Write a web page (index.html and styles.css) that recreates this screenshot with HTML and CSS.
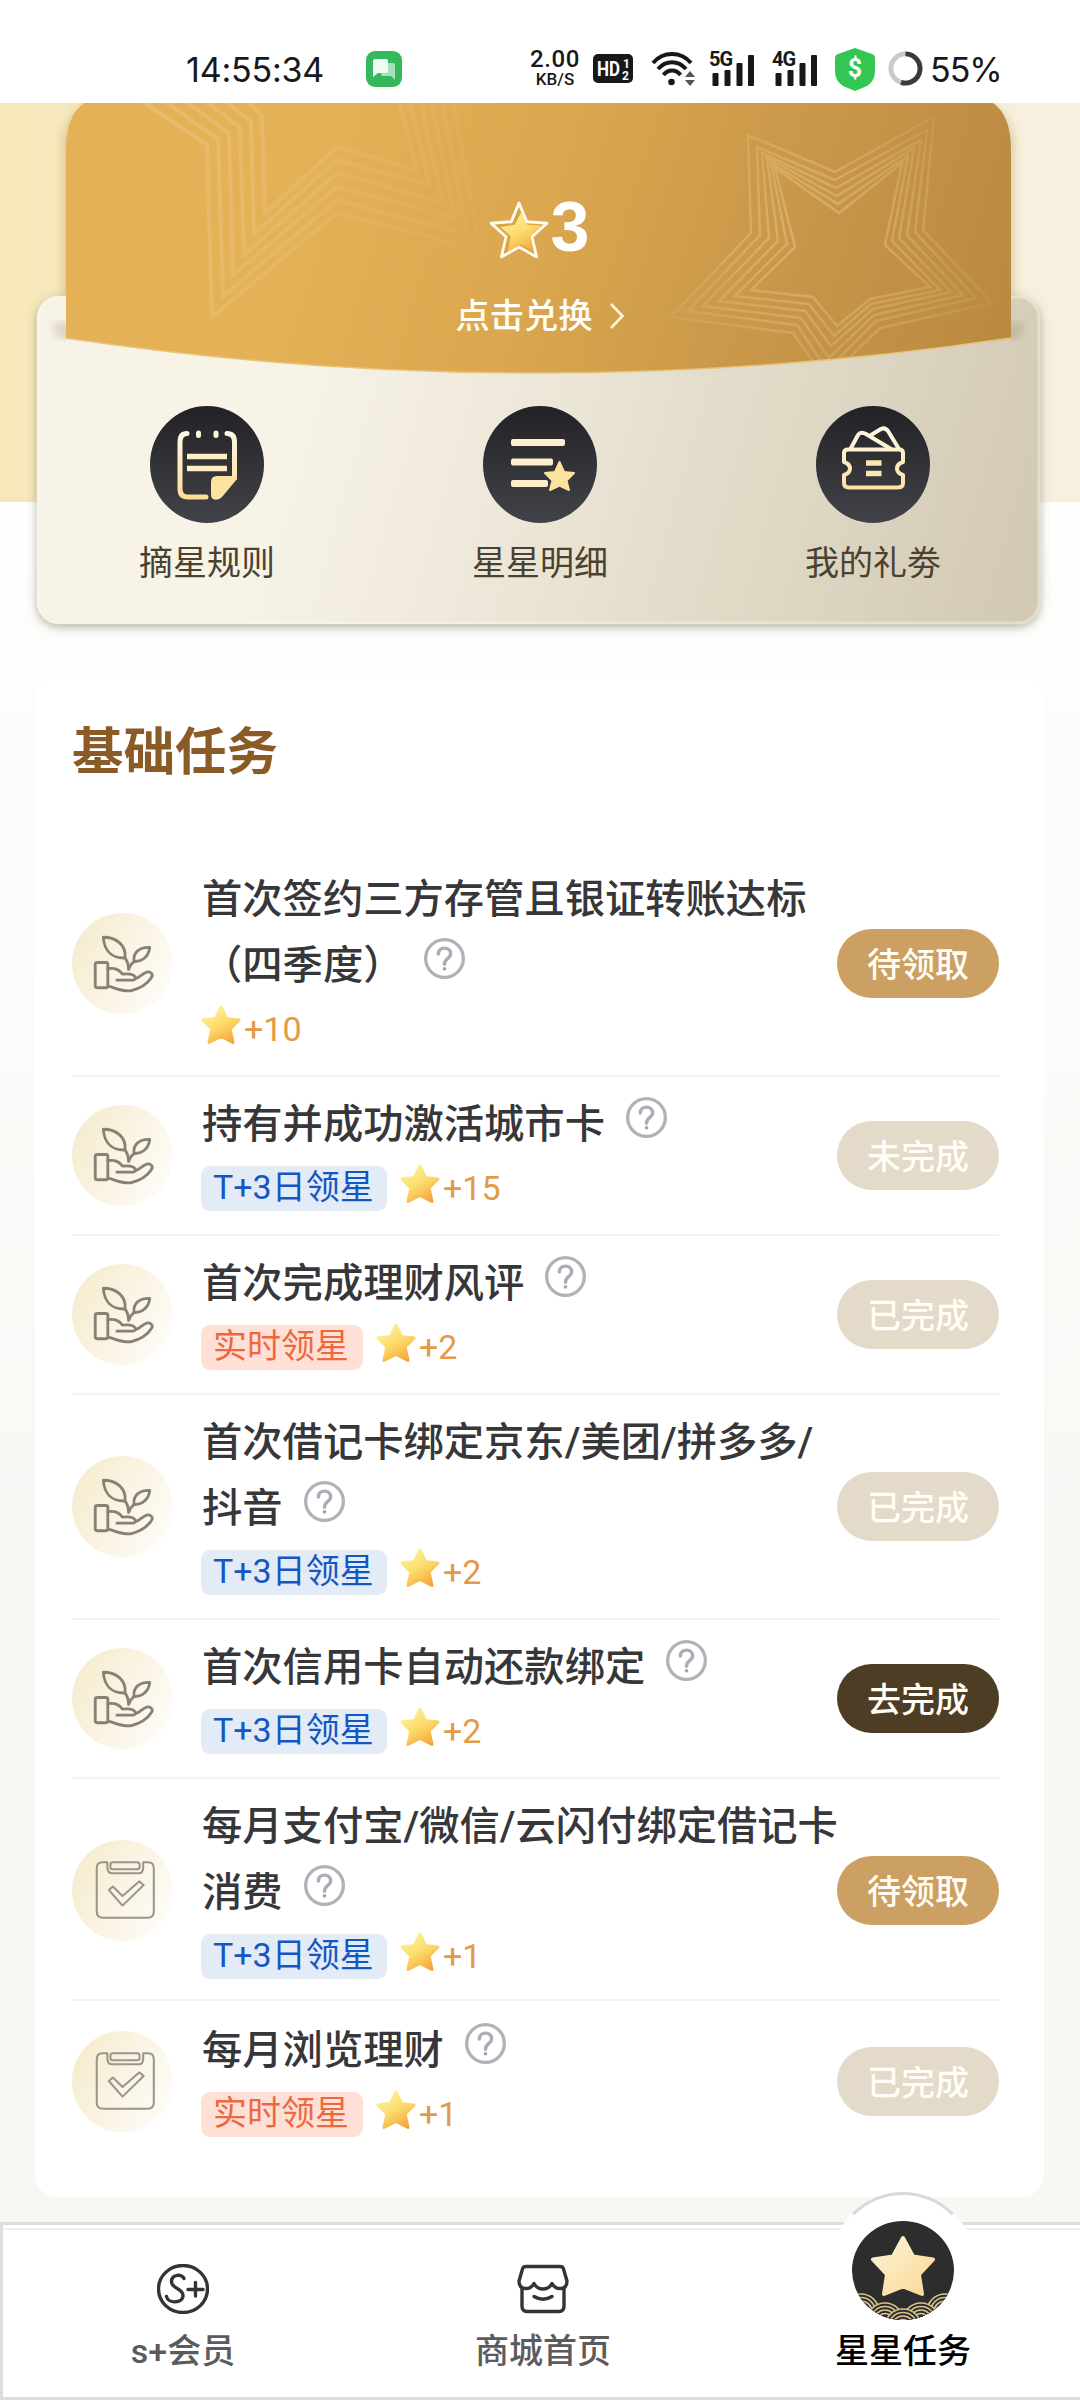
FILE: index.html
```html
<!DOCTYPE html>
<html lang="zh-CN">
<head>
<meta charset="utf-8">
<title>星星任务</title>
<link rel="stylesheet" href="styles.css">
</head>
<body>
<svg class="sprite" aria-hidden="true">
  <defs>
    <linearGradient id="starFill" x1="0.2" y1="0" x2="0.75" y2="1">
      <stop offset="0" stop-color="#fdf29a"/><stop offset="0.5" stop-color="#fcdc6c"/><stop offset="1" stop-color="#f4a63c"/>
    </linearGradient>
    <linearGradient id="cream" gradientUnits="userSpaceOnUse" x1="0" y1="22" x2="0" y2="95">
      <stop offset="0" stop-color="#fff9e8"/><stop offset="1" stop-color="#fbdc93"/>
    </linearGradient>
    <linearGradient id="blob" x1="0" y1="0.2" x2="1" y2="0.7">
      <stop offset="0" stop-color="#f5ebcd"/><stop offset="1" stop-color="#fefcf8"/>
    </linearGradient>
    <symbol id="i-star" viewBox="0 0 40 42">
      <path d="M20 3 L25.6 14.5 L38 16 L29.2 25 L32 38.5 L20 32.5 L8 38.5 L10.8 25 L2 16 L14.4 14.5 Z" fill="url(#starFill)" stroke="url(#starFill)" stroke-width="3" stroke-linejoin="round"/>
    </symbol>
    <symbol id="i-help" viewBox="0 0 40 40">
      <circle cx="20" cy="20" r="18.400" fill="none" stroke="#b0b2ba" stroke-width="3.200"/>
      <path d="M14 15.5 C14 8 26 8 26 15.5 C26 20 20 19.8 20 25.5" fill="none" stroke="#abadb6" stroke-width="3.400" stroke-linecap="round"/>
      <circle cx="20" cy="30" r="1.8" fill="#a4a6b0"/>
    </symbol>
    <symbol id="i-plant" viewBox="0 0 100 100">
      <circle cx="50" cy="50" r="50" fill="url(#blob)"/>
      <g fill="none" stroke="#888075" stroke-width="2.8" stroke-linecap="round" stroke-linejoin="round">
        <path d="M31 24 C44 24 54 32 52.5 44.5 C40 45 32 38 31 24 Z"/>
        <path d="M77 34 C67 33.5 60 39 61.5 48 C70 48.5 76 42.5 77 34 Z"/>
        <path d="M52.5 44.5 C55 48 56 51 56 56 C57 52 58.500 50.500 61.500 48"/>
        <rect x="23" y="49" width="12.500" height="25" rx="2"/>
        <path d="M35.500 55 C44 54 47 57 50 60.500 C55 60 62 60.500 63 64.500 C62.500 66 62 66.500 60 66.500 H44.500 M63 65 C67 64 70 59.500 74 58.500 C78 57.500 81 61 78.500 64 C74 71 66 75 58 77 C50 78 44 74.500 35.500 72.500"/>
      </g>
    </symbol>
    <symbol id="i-board" viewBox="0 0 100 100">
      <circle cx="50" cy="50" r="50" fill="url(#blob)"/>
      <g fill="none" stroke="#9a958c" stroke-width="2" stroke-linejoin="round">
        <path d="M35 22 H30 Q24.500 22 24.500 28 V70.500 Q24.500 77 31 77 H74.500 Q81 77 81 70.500 V28 Q81 22 75.500 22 H70.500 V27 Q70.500 33 66 33 H40 Q35 33 35 27 Z"/>
        <rect x="38" y="22" width="29" height="7" rx="2.500"/>
        <path d="M36.500 49.500 L40.500 46 L50 55.500 L66.500 41 L71 44.500 L50 65 Z"/>
      </g>
    </symbol>
    <symbol id="i-bars" viewBox="0 0 46 36">
      <g fill="#17181a"><rect x="3.500" y="22" width="6" height="13" rx="1"/><rect x="15.500" y="19" width="6" height="16" rx="1"/><rect x="27.500" y="12" width="6" height="23" rx="1"/><rect x="39" y="4" width="6" height="31" rx="1"/></g>
    </symbol>
  </defs>
</svg>

<header class="status">
  <span class="clock">14:55:34</span>
  <svg class="chat" viewBox="0 0 36 36"><rect width="36" height="36" rx="9" fill="#35b85c"/><path d="M17 12h10a2 2 0 0 1 2 2v15l-4-4h-8a2 2 0 0 1-2-2v-9a2 2 0 0 1 2-2z" fill="#a9e2ba"/><path d="M9 8h11a2 2 0 0 1 2 2v10a2 2 0 0 1-2 2h-8l-5 4V10a2 2 0 0 1 2-2z" fill="#f1fbf3"/></svg>
  <span class="speed"><b>2.00</b><i>KB/S</i></span>
  <svg class="hd" viewBox="0 0 40 29"><rect width="40" height="29" rx="5" fill="#17181a"/><g fill="#fff" font-family="Roboto, sans-serif" font-weight="700"><text x="4" y="22" font-size="20" textLength="23" lengthAdjust="spacingAndGlyphs">HD</text><text x="30" y="14" font-size="12">1</text><text x="29" y="26" font-size="12">2</text></g></svg>
  <svg class="wifi" viewBox="0 0 44 36"><g fill="none" stroke="#17181a" stroke-width="4"><path d="M2 12 C12 0 30 0 40 12"/><path d="M7 18 C15 9 27 9 35 18"/><path d="M12.500 24 C17 18 25 18 29.500 24"/></g><circle cx="20.500" cy="31" r="3.300" fill="#17181a"/><path d="M34 26l5-6 5 6zM34 29l5 6 5-6z" fill="#555"/></svg>
  <span class="signal s5"><svg viewBox="0 0 46 36"><use href="#i-bars"/></svg><em>5G</em></span>
  <span class="signal s4"><svg viewBox="0 0 46 36"><use href="#i-bars"/></svg><em>4G</em></span>
  <svg class="shield" viewBox="0 0 40 44"><path d="M20 1 L37 7 Q40 8 40 11 V24 Q40 34 32 39 L20 44 L8 39 Q0 34 0 24 V11 Q0 8 3 7 Z" fill="#33c653"/><text x="20" y="30" font-family="Roboto, sans-serif" font-size="25" font-weight="700" fill="#fff" text-anchor="middle">$</text></svg>
  <svg class="ring" viewBox="0 0 36 36"><circle cx="18" cy="18" r="15" fill="none" stroke="#c9c9c9" stroke-width="5"/><path d="M18 3 A15 15 0 1 1 13.400 32.300" fill="none" stroke="#3a3a3c" stroke-width="5"/></svg>
  <span class="battery">55%</span>
</header>

<main>
  <section class="wallet">
    <svg class="wallet-art" viewBox="0 103 1080 577" aria-hidden="true">
      <defs>
        <linearGradient id="gold" gradientUnits="userSpaceOnUse" x1="330" y1="120" x2="1000" y2="330">
          <stop offset="0" stop-color="#e4b157"/><stop offset="0.3" stop-color="#dca84f"/><stop offset="0.6" stop-color="#cc9a4a"/><stop offset="1" stop-color="#ba8a42"/>
        </linearGradient>
        <linearGradient id="holder" gradientUnits="userSpaceOnUse" x1="300" y1="350" x2="1040" y2="560">
          <stop offset="0" stop-color="#f7f3e7"/><stop offset="0.25" stop-color="#f0eadd"/><stop offset="0.5" stop-color="#e4dfcd"/><stop offset="1" stop-color="#d2c9b3"/>
        </linearGradient>
        <filter id="drop" x="-10%" y="-10%" width="120%" height="125%"><feDropShadow dx="0" dy="3" stdDeviation="5" flood-color="#6b6140" flood-opacity="0.5"/></filter>
        <filter id="soft" x="-10%" y="-10%" width="120%" height="120%"><feGaussianBlur stdDeviation="4"/></filter>
        <clipPath id="goldClip"><path d="M66 150 Q66 96 110 96 H967 Q1011 96 1011 150 V338 Q775 373 540 373 Q300 373 66 338 Z"/></clipPath>
        <clipPath id="holderClip"><rect x="37" y="296" width="1003" height="328" rx="22"/></clipPath>
        <linearGradient id="fadeL" gradientUnits="userSpaceOnUse" x1="130" y1="110" x2="470" y2="230"><stop offset="0" stop-color="#fff" stop-opacity="0.15"/><stop offset="1" stop-color="#fff" stop-opacity="0.02"/></linearGradient>
        <radialGradient id="fadeR" gradientUnits="userSpaceOnUse" cx="820" cy="240" r="180"><stop offset="0" stop-color="#fbe3b0" stop-opacity="0.34"/><stop offset="0.5" stop-color="#fbe3b0" stop-opacity="0.22"/><stop offset="1" stop-color="#fbe3b0" stop-opacity="0.06"/></radialGradient>
      </defs>
      <rect x="62" y="98" width="953" height="260" rx="46" fill="#b89e5c" opacity="0.35" filter="url(#soft)"/>
      <rect x="37" y="296" width="1003" height="328" rx="22" fill="url(#holder)" filter="url(#drop)"/>
      <rect x="38" y="297" width="1001" height="326" rx="21" fill="none" stroke="#fbf9f0" stroke-width="3" opacity="0.4"/>
      <g clip-path="url(#holderClip)"><path d="M54 322 V328 Q56 340 68 340 H1009 Q1021 340 1023 328 V322 Z" fill="#8d8468" opacity="0.28" filter="url(#soft)"/><path d="M66 339 Q300 376 540 376 Q775 376 1011 339 L1011 350 L540 388 L66 350Z" fill="url(#holder)"/></g>
      <g clip-path="url(#goldClip)">
        <rect x="66" y="96" width="945" height="280" fill="url(#gold)"/>
        <g fill="none" stroke="url(#fadeL)" stroke-width="4">
          <path d="M230 85 L262 116 L265 213 L337 147 L417 170 L396 90"/>
          <path d="M210 87 L251 122 L254 234 L337 160 L430 186 L407 90"/>
          <path d="M190 88 L240 128 L244 255 L337 173 L442 202 L418 90"/>
          <path d="M170 90 L229 133 L233 275 L337 187 L455 218 L429 90"/>
          <path d="M150 91 L218 139 L223 296 L337 200 L467 234 L440 90"/>
          <path d="M130 93 L207 145 L212 317 L337 213 L480 250 L451 90"/>
        </g>
        <g fill="none" stroke="url(#fadeR)" stroke-width="2.500">
          <path d="M835 172 L934 117 L923 230 L992 303 L880 328 L826 380 L793 333 L671 317 L751 233 L748 135 Z"/>
          <path d="M835 180 L927 130 L915 232 L976 298 L876 321 L827 370 L797 325 L688 311 L760 235 L757 147 Z"/>
          <path d="M836 188 L921 140 L907 235 L963 295 L874 315 L829 358 L801 318 L703 306 L769 238 L762 153 Z"/>
          <path d="M837 196 L914 148 L899 238 L951 292 L873 309 L831 346 L805 311 L719 301 L778 241 L767 158 Z"/>
          <path d="M838 204 L908 156 L892 241 L940 290 L871 304 L834 336 L809 304 L735 296 L787 244 L771 163 Z"/>
          <path d="M839 213 L902 163 L885 245 L930 287 L870 299 L837 326 L813 297 L751 290 L795 247 L775 168 Z"/>
        </g>
      </g>
      <path d="M66 338 Q300 373 540 373 Q775 373 1011 338" fill="none" stroke="#e9c27a" stroke-width="1.500"/>
    </svg>
    <div class="balance">
      <svg viewBox="0 0 58 58"><path d="M29 3 L36.500 21 L56 22.500 L41.500 35.500 L46 55 L29 45.500 L12 55 L16.500 35.500 L2 22.500 L21.500 21 Z" fill="#d9a443" stroke="#fffaf0" stroke-width="2.800" stroke-linejoin="round"/><path d="M31 12 L37 24 L51 25 L40 35 L43 50 L31 43 L18 50 L21 35 L11 26 L25 24 Z" fill="url(#starFill)"/></svg>
      <strong>3</strong>
    </div>
    <div class="redeem">点击兑换<svg viewBox="0 0 16 28"><path d="M2 2 L13.500 14 L2 26" fill="none" stroke="#fff3d8" stroke-width="2.600"/></svg></div>
    <nav class="actions">
      <a>
        <svg viewBox="0 0 114 117"><defs><linearGradient id="night" x1="0" y1="0" x2="0" y2="1"><stop offset="0" stop-color="#222226"/><stop offset="1" stop-color="#424348"/></linearGradient></defs><ellipse cx="57" cy="58.500" rx="57" ry="58.500" fill="url(#night)"/><g fill="none" stroke="url(#cream)" stroke-width="5" stroke-linecap="round"><path d="M37 27.500 Q30 27.500 30 36 V83 Q30 91 38 91 H56 M77 27.500 Q84.500 27.500 84.500 36 V72"/><path d="M48.500 27 V29.500 M66 27 V29.500"/></g><path d="M37 50.500 h40 M37 62.500 h40" stroke="#fdeec4" stroke-width="5.500"/><path d="M87 70 V73 L72 91 Q68 95 63 93 Q61 92 61 88 V76 Q61 70 67 70 Z" fill="#fce3a0"/></svg>
        <span>摘星规则</span>
      </a>
      <a>
        <svg viewBox="0 0 114 117"><ellipse cx="57" cy="58.500" rx="57" ry="58.500" fill="url(#night)"/><g fill="#fdefcb"><rect x="28" y="33" width="54" height="7" rx="2"/><rect x="28" y="52.500" width="42" height="7" rx="2"/><rect x="28" y="74" width="37" height="7" rx="2"/></g><path d="M76.500 56 L81 66 L91 67 L83.500 74.500 L86 84 L76.500 79.500 L67 84 L69.500 74.500 L62 67 L72 66 Z" fill="#fce3a0" stroke="#fce3a0" stroke-width="2" stroke-linejoin="round"/></svg>
        <span>星星明细</span>
      </a>
      <a>
        <svg viewBox="0 0 114 117"><ellipse cx="57" cy="58.500" rx="57" ry="58.500" fill="url(#night)"/><g fill="none" stroke="url(#cream)" stroke-width="4" stroke-linejoin="round" stroke-linecap="round"><path d="M32 43.500 H83 Q87 43.500 87 47 V56 Q81 58 81 62.500 Q81 67 87 69 V77 Q87 81.500 82 81.500 H33 Q28 81.500 28 77 V69 Q34 67 34 62.500 Q34 58 28 56 V47 Q28 43.500 32 43.500 Z"/><path d="M35 42 L42 29 Q45 25 50 28 L75 43 M55 29 L65 23 Q69 21 72 25 L83 43"/></g><path d="M50 57 h15.500 M50 67.500 h15.500" stroke="#fce7b3" stroke-width="5.500"/></svg>
        <span>我的礼劵</span>
      </a>
    </nav>
  </section>

  <section class="tasks">
    <h2>基础任务</h2>
    <ul>
      <li>
        <svg class="kind"><use href="#i-plant"/></svg>
        <div class="info"><p>首次签约三方存管且银证转账达标<br>（四季度）<svg class="help"><use href="#i-help"/></svg></p><div class="meta"><svg class="star"><use href="#i-star"/></svg><span class="pts">+10</span></div></div>
        <button class="btn ready">待领取</button>
      </li>
      <li>
        <svg class="kind"><use href="#i-plant"/></svg>
        <div class="info"><p>持有并成功激活城市卡<svg class="help"><use href="#i-help"/></svg></p><div class="meta"><span class="tag later">T+3日领星</span><svg class="star"><use href="#i-star"/></svg><span class="pts">+15</span></div></div>
        <button class="btn off">未完成</button>
      </li>
      <li>
        <svg class="kind"><use href="#i-plant"/></svg>
        <div class="info"><p>首次完成理财风评<svg class="help"><use href="#i-help"/></svg></p><div class="meta"><span class="tag now">实时领星</span><svg class="star"><use href="#i-star"/></svg><span class="pts">+2</span></div></div>
        <button class="btn off">已完成</button>
      </li>
      <li>
        <svg class="kind"><use href="#i-plant"/></svg>
        <div class="info"><p>首次借记卡绑定京东/美团/拼多多/<br>抖音<svg class="help"><use href="#i-help"/></svg></p><div class="meta"><span class="tag later">T+3日领星</span><svg class="star"><use href="#i-star"/></svg><span class="pts">+2</span></div></div>
        <button class="btn off">已完成</button>
      </li>
      <li>
        <svg class="kind"><use href="#i-plant"/></svg>
        <div class="info"><p>首次信用卡自动还款绑定<svg class="help"><use href="#i-help"/></svg></p><div class="meta"><span class="tag later">T+3日领星</span><svg class="star"><use href="#i-star"/></svg><span class="pts">+2</span></div></div>
        <button class="btn go">去完成</button>
      </li>
      <li class="compact">
        <svg class="kind"><use href="#i-board"/></svg>
        <div class="info"><p>每月支付宝/微信/云闪付绑定借记卡<br>消费<svg class="help"><use href="#i-help"/></svg></p><div class="meta"><span class="tag later">T+3日领星</span><svg class="star"><use href="#i-star"/></svg><span class="pts">+1</span></div></div>
        <button class="btn ready">待领取</button>
      </li>
      <li class="last">
        <svg class="kind"><use href="#i-board"/></svg>
        <div class="info"><p>每月浏览理财<svg class="help"><use href="#i-help"/></svg></p><div class="meta"><span class="tag now">实时领星</span><svg class="star"><use href="#i-star"/></svg><span class="pts">+1</span></div></div>
        <button class="btn off">已完成</button>
      </li>
    </ul>
  </section>
</main>

<nav class="tabs">
  <a><svg class="tab-icon" viewBox="0 0 52 50"><ellipse cx="26" cy="25" rx="24.500" ry="23.500" fill="none" stroke="#333437" stroke-width="3.400"/><path d="M27 14.500 C25 9.500 14.500 10 14.500 17.500 C14.500 25 26 24 26 31.500 C26 39.500 11 40 9.500 32.500" fill="none" stroke="#333437" stroke-width="3.400" stroke-linecap="round"/><path d="M38.500 18.500 V32 M31 25.500 H46" stroke="#333437" stroke-width="3.400" stroke-linecap="round"/></svg><span>s+会员</span></a>
  <a><svg class="tab-icon" viewBox="0 0 52 50"><g fill="none" stroke="#333437" stroke-width="3.400" stroke-linejoin="round" stroke-linecap="round"><path d="M9 2.500 H43 Q46 2.500 46.500 5 L50 17 Q50 24 44 24.500 Q38 25 35 19.500 Q32 25 26 25 Q20 25 17 19.500 Q14 25 8 24.500 Q2 24 2 17 L5.500 5 Q6 2.500 9 2.500 Z"/><path d="M5 25 V42 Q5 47.500 10 47.500 H42 Q47 47.500 47 42 V25"/><path d="M17 32.500 Q26 38 35 32.500"/></g></svg><span>商城首页</span></a>
  <a class="active">
    <span class="bump"></span>
    <svg class="medal" viewBox="0 0 102 99">
      <defs><clipPath id="mc"><ellipse cx="51" cy="49.500" rx="51" ry="49.500"/></clipPath><linearGradient id="medalStar" x1="0" y1="0" x2="1" y2="1"><stop offset="0" stop-color="#fdf3d8"/><stop offset="1" stop-color="#fad893"/></linearGradient></defs>
      <g clip-path="url(#mc)"><rect width="102" height="99" fill="#2d2d2d"/>
        <g fill="#2d2d2d" stroke="#d9c38c" stroke-width="1.700">
          <g id="wave"><circle cx="9" cy="91" r="18"/><circle cx="9" cy="91" r="14.500"/><circle cx="9" cy="91" r="11"/><circle cx="9" cy="91" r="7.500"/></g><use href="#wave" x="84"/>
          <use href="#wave" x="24" y="9"/><use href="#wave" x="60" y="9"/><use href="#wave" x="42" y="15"/>
        </g></g>
      <path d="M51 17 L61 35.500 L81 38.500 L67 53.500 L70 73 L51 65.500 L32 73 L35 53.500 L21 38.500 L41 35.500 Z" fill="url(#medalStar)" stroke="url(#medalStar)" stroke-width="4" stroke-linejoin="round"/>
    </svg>
    <span>星星任务</span>
  </a>
</nav>
</body>
</html>
```
FILE: styles.css
```css
* { box-sizing: border-box; margin: 0; padding: 0; }
body {
  width: 1080px;
  height: 2400px;
  overflow: hidden;
  display: flex;
  flex-direction: column;
  background: #fff;
  font-family: Roboto, "Noto Sans CJK SC", sans-serif;
  font-size: 34px;
  color: #37373a;
}
.sprite { position: absolute; width: 0; height: 0; }
svg { flex: none; display: block; }

/* status bar */
.status {
  height: 103px;
  flex: none;
  display: flex;
  align-items: center;
  padding: 34px 0 0 186px;
  color: #17181a;
  font-family: Inter, Roboto, sans-serif;
}
.clock { width: 180px; font-size: 34px; letter-spacing: -0.2px; padding-top: 2px; }
.chat { width: 36px; height: 36px; margin-right: 126px; }
.speed { width: 54px; display: flex; flex-direction: column; align-items: center; margin-right: 11px; font-family: Roboto, sans-serif; font-weight: 500; }
.speed b { font-size: 24px; line-height: 22px; font-weight: 500; letter-spacing: 0.6px; }
.speed i { font-size: 17px; line-height: 19px; font-style: normal; }
.hd { width: 40px; height: 29px; margin-right: 18px; }
.wifi { width: 44px; height: 36px; margin-right: 14px; }
.signal { position: relative; width: 46px; height: 36px; margin-right: 17px; }
.signal svg { width: 46px; height: 36px; }
.signal em { position: absolute; left: 0; top: -2px; font: 700 20px/20px Roboto, sans-serif; letter-spacing: -1px; background: #fff; height: 18px; }
.shield { width: 40px; height: 44px; margin-right: 13px; }
.ring { width: 35px; height: 35px; margin-right: 7px; }
.battery { font-size: 34px; letter-spacing: -1px; padding-top: 2px; }

/* page */
main {
  flex: 1;
  background:
    linear-gradient(90deg, #f6e8bb, #f6ebc9 50%, #f7f0df) 0 0 / 100% 399px no-repeat,
    linear-gradient(#fefefd 399px, #f8f7f4 1500px);
}

/* wallet */
.wallet { position: relative; height: 576px; padding-top: 92px; }
.wallet-art { position: absolute; left: 0; top: 0; width: 1080px; height: 577px; }
.balance, .redeem, .actions { position: relative; }
.balance { display: flex; justify-content: center; align-items: center; height: 64px; gap: 2px; padding-right: 2px; color: #fff; }
.balance svg { width: 60px; height: 60px; margin-top: 5px; }
.balance strong { font: 700 70px/64px "Liberation Sans", sans-serif; }
.redeem { display: flex; justify-content: center; align-items: center; gap: 16px; height: 48px; margin-top: 33px; color: #fffdf5; font-size: 34.3px; font-weight: 500; line-height: 48px; }
.redeem svg { width: 16px; height: 28px; }
.actions { display: flex; justify-content: space-between; padding: 0 140px; margin-top: 66px; }
.actions a { width: 134px; display: flex; flex-direction: column; align-items: center; color: #4b4130; }
.actions svg { width: 114px; height: 117px; }
.actions span { margin-top: 16px; line-height: 48px; white-space: nowrap; }

/* task list */
.tasks {
  width: 1009px;
  height: 1518px;
  margin-left: 35px;
  padding: 44px 45px 0 37px;
  border-radius: 22px;
  background: #fff;
}
h2 { font-size: 51.5px; line-height: 60px; font-weight: 700; color: #8b5b27; margin-bottom: 69px; }
ul { list-style: none; }
li { display: flex; align-items: center; padding: 15px 0 23px; border-bottom: 2px solid #f3f3f4; }
li.compact { padding-bottom: 20px; }
li.last { padding-top: 17px; border-bottom: 0; }
.kind { width: 101px; height: 101px; margin: 8px 28px 0 0; }
.info { width: 636px; flex: none; white-space: nowrap; padding-left: 1px; }
.info p { font-size: 40.3px; line-height: 66px; font-weight: 500; }
.help { display: inline-block; width: 41px; height: 41px; margin-left: 21px; vertical-align: 0; }
.meta { display: flex; align-items: center; height: 45px; margin: 8px 0 0 -1px; }
.tag { height: 45px; padding: 0 12px; border-radius: 9px; line-height: 42px; margin-right: 13px; }
.later { width: 186px; background: #e3ebf7; color: #1257c3; }
.now { width: 162px; background: #ffe0d7; color: #ee683f; }
.star { width: 40px; height: 42px; margin-top: -9px; }
.pts { margin-left: 3px; line-height: 45px; color: #e39a46; }
.btn { width: 162px; height: 69px; margin-top: 8px; border: 0; border-radius: 35px; font: 500 34px/69px Roboto, "Noto Sans CJK SC", sans-serif; color: #fffdf6; padding-top: 2px; }
.ready { background: #cba062; }
.off { background: #e3daca; }
.go { background: #4d3d25; }

/* bottom tabs */
.tabs {
  position: relative;
  height: 178px;
  flex: none;
  display: flex;
  padding-top: 39px;
  background: #fff;
  border: 3px solid #dedddd;
  border-right: 0;
}
.tabs::before { content: ""; position: absolute; left: 0; right: 0; top: 3px; height: 2px; background: #f0f0f0; }
.tabs a { width: 360px; flex: none; display: flex; flex-direction: column; align-items: center; color: #5b5b5d; font-weight: 500; }
.tab-icon { width: 52px; height: 50px; }
.tabs a > span:last-child { line-height: 48px; margin-top: 13px; }
.tabs .active { position: relative; color: #000; }
.bump { position: absolute; top: -72px; left: 108px; width: 144px; height: 144px; border-radius: 50%; background: #fff; border: 3px solid; border-color: #d9d9d9 transparent transparent; }
.medal { position: relative; width: 102px; height: 99px; margin: -43px 0 -6px; }
```
